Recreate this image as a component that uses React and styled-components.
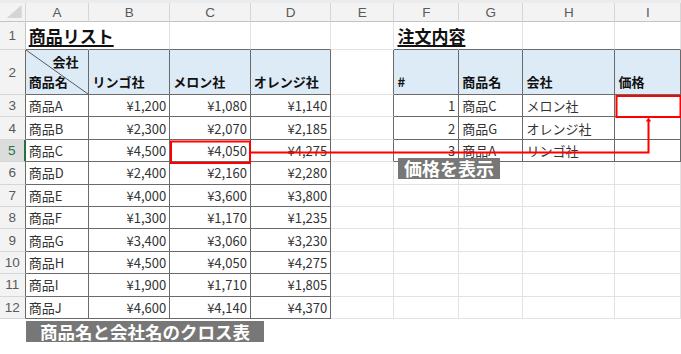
import React from 'react';
import styled, { createGlobalStyle } from 'styled-components';

const COLS = ['A', 'B', 'C', 'D', 'E', 'F', 'G', 'H', 'I'];
const WIDTHS = [63.8, 80.7, 80.7, 80.3, 63.3, 64.7, 64.3, 92, 66];
const ROW_HEIGHTS = [28, 45, ...Array(10).fill(22.4)];

const GRID = '#e2e2e2';
const DARK = '#6a6a6a';
const HEAD_FILL = '#ddebf7';

const products = [
  ['商品A', '¥1,200', '¥1,080', '¥1,140'],
  ['商品B', '¥2,300', '¥2,070', '¥2,185'],
  ['商品C', '¥4,500', '¥4,050', '¥4,275'],
  ['商品D', '¥2,400', '¥2,160', '¥2,280'],
  ['商品E', '¥4,000', '¥3,600', '¥3,800'],
  ['商品F', '¥1,300', '¥1,170', '¥1,235'],
  ['商品G', '¥3,400', '¥3,060', '¥3,230'],
  ['商品H', '¥4,500', '¥4,050', '¥4,275'],
  ['商品I', '¥1,900', '¥1,710', '¥1,805'],
  ['商品J', '¥4,600', '¥4,140', '¥4,370'],
];

const orders = [
  ['1', '商品C', 'メロン社'],
  ['2', '商品G', 'オレンジ社'],
  ['3', '商品A', 'リンゴ社'],
];

// which cells belong to a bordered table (r: 1..12, c: 0..8)
const inTable = (r, c) =>
  (c >= 0 && c <= 3 && r >= 2 && r <= 12) || (c >= 5 && c <= 8 && r >= 2 && r <= 5);

function buildRows() {
  const rows = [];
  for (let r = 1; r <= 12; r++) {
    const cells = Array(9).fill(null);
    if (r === 1) {
      cells[0] = { text: '商品リスト', kind: 'title' };
      cells[5] = { text: '注文内容', kind: 'title' };
    } else if (r === 2) {
      cells[0] = { kind: 'diag' };
      cells[1] = { text: 'リンゴ社', kind: 'head' };
      cells[2] = { text: 'メロン社', kind: 'head' };
      cells[3] = { text: 'オレンジ社', kind: 'head' };
      cells[5] = { text: '#', kind: 'head' };
      cells[6] = { text: '商品名', kind: 'head' };
      cells[7] = { text: '会社', kind: 'head' };
      cells[8] = { text: '価格', kind: 'head' };
    } else {
      const p = products[r - 3];
      cells[0] = { text: p[0], kind: 'text' };
      cells[1] = { text: p[1], kind: 'num' };
      cells[2] = { text: p[2], kind: 'num' };
      cells[3] = { text: p[3], kind: 'num' };
      const o = orders[r - 3];
      if (o) {
        cells[5] = { text: o[0], kind: 'num' };
        cells[6] = { text: o[1], kind: 'text' };
        cells[7] = { text: o[2], kind: 'text' };
      }
    }
    rows.push(cells);
  }
  return rows;
}

export default function App() {
  const rows = buildRows();

  return (
    <Page>
      <GlobalStyle />
      <TopStrip />
      <Sheet>
        <Grid>
          <Corner />
          {COLS.map((c) => (
            <ColHead key={c}>{c}</ColHead>
          ))}
          {rows.map((cells, i) => {
            const r = i + 1;
            return (
              <React.Fragment key={r}>
                <RowHead $active={r === 5} $dark={inTable(r, 0)}>
                  {r}
                </RowHead>
                {cells.map((cell, c) => {
                  const right = inTable(r, c) || inTable(r, c + 1) ? DARK : GRID;
                  const bottom = inTable(r, c) || inTable(r + 1, c) ? DARK : GRID;
                  const kind = cell ? cell.kind : 'empty';
                  const hideRight = kind === 'title';
                  return (
                    <Cell
                      key={c}
                      $right={hideRight ? 'transparent' : right}
                      $bottom={bottom}
                      $fill={r === 2 && inTable(r, c) ? HEAD_FILL : 'transparent'}
                      $kind={kind}
                    >
                      {kind === 'diag' ? (
                        <DiagBox>
                          <DiagTop>会社</DiagTop>
                          <DiagBottom>商品名</DiagBottom>
                        </DiagBox>
                      ) : kind === 'title' ? (
                        <Title>{cell.text}</Title>
                      ) : (
                        cell && cell.text
                      )}
                    </Cell>
                  );
                })}
              </React.Fragment>
            );
          })}
        </Grid>

        <Overlay width="681" height="354" viewBox="0 0 681 354">
          <rect x="171" y="141.5" width="79" height="21.5" fill="none" stroke="#ff0000" strokeWidth="2" />
          <rect x="616.5" y="96" width="64" height="21" fill="none" stroke="#ff0000" strokeWidth="2" />
          <polyline
            points="251,152.5 648.5,152.5 648.5,121"
            fill="none"
            stroke="#ff0000"
            strokeWidth="2"
          />
          <polygon points="648.5,117.5 651.2,121.5 645.8,121.5" fill="#ff0000" />
        </Overlay>

        <Callout>価格を表示</Callout>
      </Sheet>

      <Caption>商品名と会社名のクロス表</Caption>
    </Page>
  );
}

const GlobalStyle = createGlobalStyle`
  html, body {
    margin: 0;
    padding: 0;
    background: #ffffff;
  }
  body {
    font-family: "Noto Sans CJK JP", "Noto Sans", sans-serif;
    overflow: hidden;
  }
`;

const Page = styled.div`
  width: 681px;
  height: 354px;
  overflow: hidden;
  display: flex;
  flex-direction: column;
`;

const TopStrip = styled.div`
  height: 3px;
  background: #e9edef;
`;

const Sheet = styled.div`
  position: relative;
`;

const Grid = styled.div`
  display: grid;
  grid-template-columns: 25.7px ${WIDTHS.map((w) => `${w}px`).join(' ')};
  grid-template-rows: 19px ${ROW_HEIGHTS.map((h) => `${h}px`).join(' ')};
  width: 681px;
`;

const Corner = styled.div`
  position: relative;
  background: #f3f3f3;
  border-right: 1px solid #d6d6d6;
  border-bottom: 1px solid #c4c4c4;
  box-sizing: border-box;

  &::after {
    content: '';
    position: absolute;
    right: 3px;
    bottom: 3px;
    width: 15px;
    height: 13px;
    background: #d4d4d4;
    clip-path: polygon(100% 0, 100% 100%, 0 100%);
  }
`;

const ColHead = styled.div`
  display: flex;
  align-items: center;
  justify-content: center;
  background: #f3f3f3;
  border-right: 1px solid #d6d6d6;
  border-bottom: 1px solid #c4c4c4;
  box-sizing: border-box;
  font-family: "Liberation Sans", "Noto Sans", sans-serif;
  font-size: 13.5px;
  color: #5a5a5a;
`;

const RowHead = styled.div`
  display: flex;
  align-items: center;
  justify-content: center;
  box-sizing: border-box;
  background: ${(p) => (p.$active ? '#dcdcdc' : '#f3f3f3')};
  border-bottom: 1px solid #d6d6d6;
  border-right: ${(p) =>
    p.$active ? '2px solid #217346' : `1px solid ${p.$dark ? DARK : '#c4c4c4'}`};
  font-family: "Liberation Sans", "Noto Sans", sans-serif;
  font-size: 13.5px;
  color: ${(p) => (p.$active ? '#217346' : '#5a5a5a')};
`;

const Cell = styled.div`
  position: relative;
  box-sizing: border-box;
  display: flex;
  min-width: 0;
  white-space: nowrap;
  overflow: visible;
  border-right: 1px solid ${(p) => p.$right};
  border-bottom: 1px solid ${(p) => p.$bottom};
  background: ${(p) => p.$fill};
  font-size: 13px;
  color: #333;
  padding: 0 3px;
  align-items: center;
  justify-content: ${(p) => (p.$kind === 'num' ? 'flex-end' : 'flex-start')};
  font-weight: ${(p) => (p.$kind === 'head' ? 700 : 400)};
  ${(p) =>
    p.$kind === 'head' &&
    `
    align-items: flex-end;
    padding-bottom: 3px;
    color: #111;
  `}
  ${(p) =>
    p.$kind === 'title' &&
    `
    align-items: flex-end;
    padding-bottom: 3px;
    z-index: 1;
  `}
  ${(p) =>
    p.$kind === 'diag' &&
    `
    padding: 0;
    background: linear-gradient(to top right, ${HEAD_FILL} calc(50% - 0.8px), #555 50%, ${HEAD_FILL} calc(50% + 0.8px));
  `}
`;

const Title = styled.span`
  font-size: 17px;
  font-weight: 700;
  color: #111;
  text-decoration: underline;
  text-decoration-thickness: 2px;
  text-underline-offset: 2px;
  line-height: 20px;
`;

const DiagBox = styled.div`
  display: flex;
  flex-direction: column;
  justify-content: space-between;
  width: 100%;
  height: 100%;
  padding: 3px 10px 3px 3px;
  box-sizing: border-box;
  font-weight: 700;
  color: #111;
  line-height: 18px;
`;

const DiagTop = styled.span`
  align-self: flex-end;
`;

const DiagBottom = styled.span`
  align-self: flex-start;
`;

const Overlay = styled.svg`
  position: absolute;
  top: -3px;
  left: 0;
  pointer-events: none;
  z-index: 2;
`;

const Callout = styled.div`
  position: absolute;
  left: 398px;
  top: 155px;
  height: 21px;
  padding: 0 6px;
  background: #777777;
  color: #ffffff;
  font-size: 18px;
  font-weight: 700;
  line-height: 21px;
  z-index: 3;
`;

const Caption = styled.div`
  align-self: flex-start;
  margin: 2px 0 0 26px;
  height: 21px;
  padding: 0 14px;
  background: #777777;
  color: #ffffff;
  font-size: 17.5px;
  font-weight: 700;
  line-height: 21px;
`;
